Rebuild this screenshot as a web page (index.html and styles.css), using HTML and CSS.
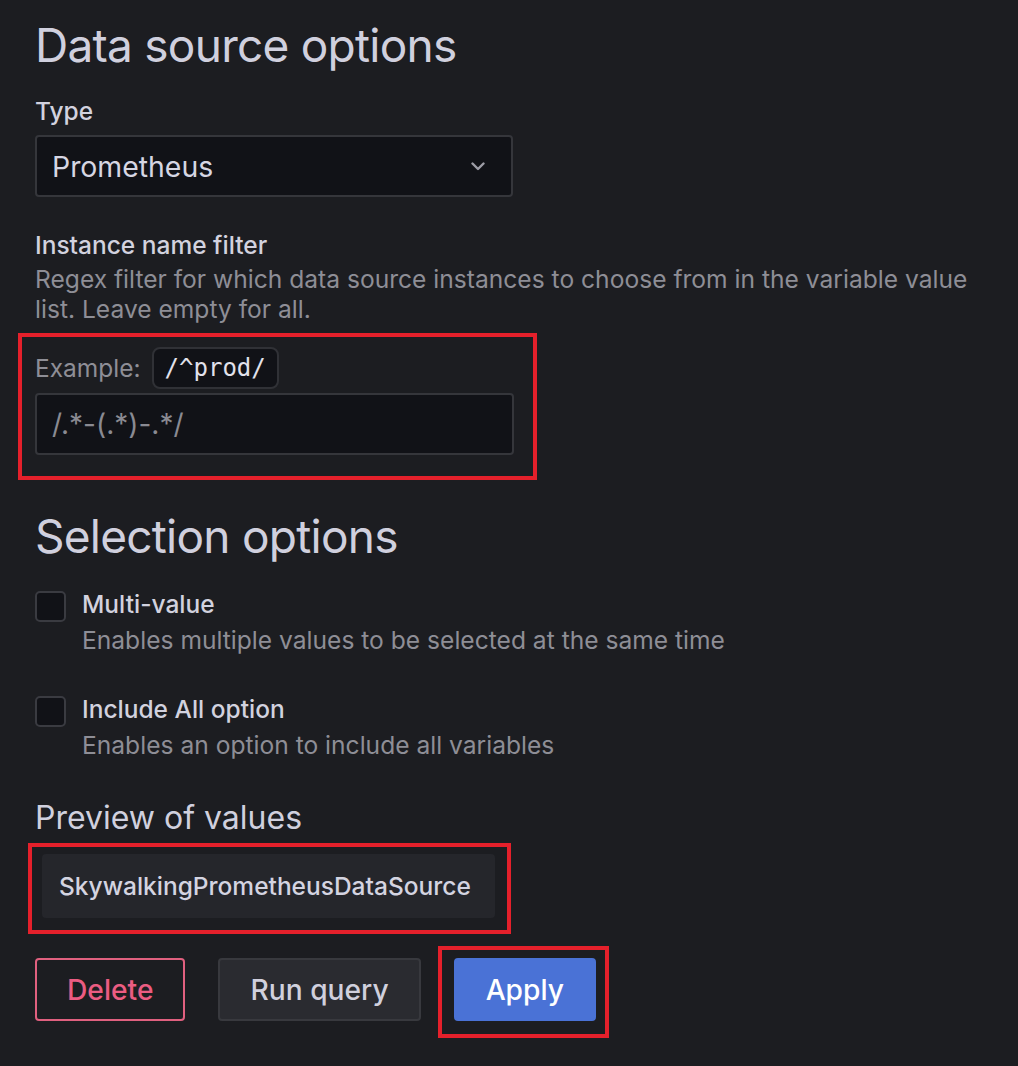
FILE: index.html
```html
<!DOCTYPE html>
<html lang="en">
<head>
<meta charset="utf-8">
<title>Data source options</title>
<link rel="stylesheet" href="styles.css">
</head>
<body>
<div class="page">
  <h2 class="section-title">Data source options</h2>

  <div class="field field-type">
    <div class="label label-type">Type</div>
    <div class="select">
      <span class="select-value">Prometheus</span>
      <svg class="chevron" width="14" height="9" viewBox="0 0 14 9"><path d="M1.5 1.5 L7 7 L12.5 1.5" fill="none" stroke="#9d9da6" stroke-width="2.4" stroke-linecap="round" stroke-linejoin="round"/></svg>
    </div>
  </div>

  <div class="field field-instance">
    <div class="label label-instance">Instance name filter</div>
    <div class="description">Regex filter for which data source instances to choose from in the variable value list. Leave empty for all.</div>
    <div class="highlight hl-filter">
      <div class="example-row">
        <span class="example-label">Example:</span>
        <code class="code-chip">/^prod/</code>
      </div>
      <input class="text-input" type="text" placeholder="/.*-(.*)-.*/">
    </div>
  </div>

  <h2 class="section-title section-selection">Selection options</h2>

  <div class="check-row check-multi">
    <span class="checkbox"></span>
    <div class="check-text">
      <div class="label check-label">Multi-value</div>
      <div class="description">Enables multiple values to be selected at the same time</div>
    </div>
  </div>

  <div class="check-row check-all">
    <span class="checkbox"></span>
    <div class="check-text">
      <div class="label check-label">Include All option</div>
      <div class="description">Enables an option to include all variables</div>
    </div>
  </div>

  <h3 class="preview-title">Preview of values</h3>
  <div class="preview-list">
    <div class="highlight hl-preview">
      <div class="preview-chip">SkywalkingPrometheusDataSource</div>
    </div>
  </div>

  <div class="button-row">
    <button class="btn btn-delete">Delete</button>
    <button class="btn btn-secondary">Run query</button>
    <div class="highlight hl-apply">
      <button class="btn btn-primary">Apply</button>
    </div>
  </div>
</div>
</body>
</html>
```

FILE: styles.css
```css
* { box-sizing: border-box; }

html, body {
  margin: 0;
  padding: 0;
  background: #1c1d21;
}

body {
  font-family: Inter, "Noto Sans", "Liberation Sans", sans-serif;
  color: #ccccdc;
  width: 1018px;
  height: 1066px;
  overflow: hidden;
}

.page {
  padding: 16px 35px 0 35px;
}

.section-title {
  margin: 0;
  font-size: 46px;
  line-height: 58px;
  font-weight: 400;
  color: #d0d0de;
  letter-spacing: -0.75px;
}

.section-selection {
  margin-top: 52px;
}

.field-type {
  margin-top: 22px;
}

.field-instance {
  margin-top: 33px;
}

.label {
  font-size: 24.5px;
  line-height: 30px;
  font-weight: 500;
  color: #d2d2df;
}

.label-type {
  margin-bottom: 9px;
}

.label-instance {
  margin-bottom: 4px;
}

.description {
  font-size: 24.6px;
  line-height: 30px;
  color: #8e8e96;
  max-width: 948px;
}

.select {
  width: 478px;
  height: 62px;
  background: #111217;
  border: 2px solid #35363b;
  border-radius: 4px;
  display: flex;
  align-items: center;
  justify-content: space-between;
  padding: 0 26px 0 15px;
}

.select-value {
  font-size: 28.4px;
  color: #d6d6e3;
}

.chevron {
  display: block;
}

.highlight {
  position: relative;
}

.highlight::after {
  content: "";
  position: absolute;
  border: 4px solid #e5202b;
  pointer-events: none;
}

.hl-filter {
  margin-top: 23px;
  width: 479px;
}

.hl-filter::after {
  top: -14px;
  bottom: -25px;
  left: -17px;
  right: -23px;
}

.example-row {
  display: flex;
  align-items: center;
  height: 42px;
  gap: 11px;
}

.example-label {
  font-size: 24.5px;
  line-height: 30px;
  color: #8e8e96;
}

.code-chip {
  font-family: "DejaVu Sans Mono", "Liberation Mono", monospace;
  font-size: 24px;
  line-height: 38px;
  height: 42px;
  padding: 0 11px;
  background: #111217;
  border: 2px solid #303136;
  border-radius: 8px;
  color: #e2e2ec;
}

.text-input {
  display: block;
  margin-top: 4px;
  width: 479px;
  height: 62px;
  background: #111217;
  border: 2px solid #35363b;
  border-radius: 4px;
  padding: 0 15px;
  font-family: Inter, "Noto Sans", sans-serif;
  font-size: 28px;
  color: #d6d6e3;
  outline: none;
}

.text-input::placeholder {
  color: #8a8a92;
}

.check-row {
  display: flex;
  align-items: flex-start;
  gap: 16px;
}

.check-multi {
  margin-top: 24px;
}

.check-all {
  margin-top: 39px;
}

.checkbox {
  flex: none;
  width: 31px;
  height: 31px;
  margin-top: 2px;
  background: #111217;
  border: 2px solid #3a3b41;
  border-radius: 5px;
}

.check-label {
  margin-bottom: 6px;
}

.preview-title {
  margin: 38px 0 0 0;
  font-size: 32px;
  line-height: 40px;
  font-weight: 400;
  color: #d0d0de;
}

.preview-list {
  margin-top: 16px;
  padding-left: 7px;
  display: flex;
}

.hl-preview::after {
  top: -11px;
  bottom: -16px;
  left: -14px;
  right: -16px;
}

.preview-chip {
  height: 64px;
  display: flex;
  align-items: center;
  padding: 0 24px 0 17px;
  background: #25262b;
  border-radius: 4px;
  font-size: 24.5px;
  font-weight: 500;
  color: #d4d4e1;
}

.button-row {
  margin-top: 40px;
  display: flex;
  gap: 33px;
  align-items: center;
}

.btn {
  height: 63px;
  padding: 0 30px;
  border-radius: 4px;
  font-family: Inter, "Noto Sans", sans-serif;
  font-size: 28.2px;
  font-weight: 500;
  border: 2px solid transparent;
  display: flex;
  align-items: center;
}

.btn-delete {
  background: transparent;
  border-color: #e0607f;
  color: #eb5c82;
}

.btn-secondary {
  background: #2a2b30;
  border-color: #38393e;
  color: #d0d0dd;
}

.btn-primary {
  background: #4a72d6;
  border-color: #4a72d6;
  color: #ffffff;
}

.hl-apply::after {
  top: -12px;
  bottom: -17px;
  left: -16px;
  right: -13px;
}
```
